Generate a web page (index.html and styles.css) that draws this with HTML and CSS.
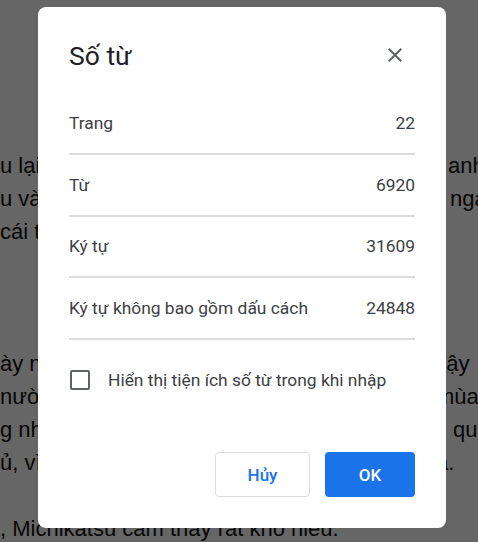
FILE: index.html
```html
<!DOCTYPE html>
<html lang="vi">
<head>
    <meta charset="UTF-8">
    <meta name="viewport" content="width=device-width, initial-scale=1.0">
    <title>Số từ</title>
    <link rel="stylesheet" href="styles.css">
</head>
<body>
    <div class="page">
        <div class="para para-first">
            <div class="line"><span class="l">u lại</span><span class="r r-2">anh</span></div>
            <div class="line"><span class="l">u vàng</span><span class="r r-4">nga</span></div>
            <div class="line"><span class="l">cái tát</span><span class="r"></span></div>
        </div>
        <div class="para para-second">
            <div class="line"><span class="l">ày nay</span><span class="r r-back12">đậy</span></div>
            <div class="line"><span class="l">nười</span><span class="r r-back10">mùa</span></div>
            <div class="line"><span class="l">g nhớ</span><span class="r r-7">qu</span></div>
            <div class="line"><span class="l">ủ, vì</span><span class="r r-back10">a.</span></div>
        </div>
        <div class="para para-third">
            <div class="line"><span class="l">, Michikatsu cảm thấy rất khó hiểu.</span><span class="r"></span></div>
        </div>
    </div>

    <div class="overlay">
        <div class="dialog" role="dialog" aria-labelledby="dialogTitle">
            <div class="dialog-head">
                <h2 id="dialogTitle" class="dialog-title">Số từ</h2>
                <button class="close-btn" aria-label="Đóng">
                    <svg width="24" height="24" viewBox="0 0 24 24"><path d="M19 6.41L17.59 5 12 10.59 6.41 5 5 6.41 10.59 12 5 17.59 6.41 19 12 13.41 17.59 19 19 17.59 13.41 12z" fill="#5f6368"/></svg>
                </button>
            </div>

            <ul class="stats">
                <li class="stat"><span>Trang</span><span>22</span></li>
                <li class="stat"><span>Từ</span><span>6920</span></li>
                <li class="stat"><span>Ký tự</span><span>31609</span></li>
                <li class="stat"><span>Ký tự không bao gồm dấu cách</span><span>24848</span></li>
            </ul>

            <label class="check">
                <span class="check-box"></span>
                <span>Hiển thị tiện ích số từ trong khi nhập</span>
            </label>

            <div class="actions">
                <button class="btn btn-cancel">Hủy</button>
                <button class="btn btn-ok">OK</button>
            </div>
        </div>
    </div>
</body>
</html>
```

FILE: styles.css
```css
html, body {
    margin: 0;
    height: 100%;
    overflow: hidden;
}
body {
    background-color: white;
    color: #111;
    font-family: "Liberation Sans", Arial, sans-serif;
}
.page {
    padding-top: 149px;
    font-size: 22px;
}
.para-second {
    margin-top: 99px;
}
.para-third {
    margin-top: 33px;
}
.line {
    display: grid;
    grid-template-columns: 446px 1fr;
    height: 33px;
    line-height: 33px;
    white-space: nowrap;
}
.l {
    overflow: hidden;
}
.r-2 { padding-left: 2px; }
.r-4 { padding-left: 4px; }
.r-7 { padding-left: 7px; }
.r-back10 { margin-left: -10px; }
.r-back12 { margin-left: -12px; }

.overlay {
    position: fixed;
    inset: 0;
    background-color: rgba(0, 0, 0, 0.6);
    padding: 7px 0 0 38px;
}
.dialog {
    width: 408px;
    height: 521px;
    box-sizing: border-box;
    padding: 24px 31px 31px;
    background-color: white;
    border-radius: 8px;
    display: flex;
    flex-direction: column;
    font-family: Roboto, "Noto Sans", sans-serif;
    color: #3c4043;
}
.dialog-head {
    display: flex;
    align-items: center;
    justify-content: space-between;
    height: 48px;
}
.dialog-title {
    margin: 0;
    font-size: 26.5px;
    font-weight: 400;
    color: #202124;
}
.close-btn {
    width: 40px;
    height: 40px;
    padding: 0;
    border: none;
    background: none;
    display: flex;
    align-items: center;
    justify-content: center;
    cursor: pointer;
}
.stats {
    list-style: none;
    margin: 14.5px 0 0;
    padding: 0;
}
.stat {
    display: flex;
    justify-content: space-between;
    align-items: center;
    height: 59.5px;
    border-bottom: 2px solid #dadce0;
    font-size: 17.4px;
}
.check {
    display: flex;
    align-items: center;
    gap: 18px;
    margin-top: 30.5px;
    height: 20px;
    font-size: 17.4px;
    padding-left: 1px;
}
.check-box {
    width: 16px;
    height: 16px;
    border: 2px solid #5f6368;
    border-radius: 2px;
}
.actions {
    margin-top: auto;
    display: flex;
    justify-content: flex-end;
    gap: 15px;
}
.btn {
    height: 45px;
    border-radius: 4px;
    font-family: Roboto, "Noto Sans", sans-serif;
    font-size: 17px;
    font-weight: 500;
    cursor: pointer;
}
.btn-cancel {
    width: 95px;
    background-color: white;
    border: 1px solid #dadce0;
    color: #1a73e8;
}
.btn-ok {
    width: 90px;
    background-color: #1a73e8;
    border: none;
    color: white;
}
```
